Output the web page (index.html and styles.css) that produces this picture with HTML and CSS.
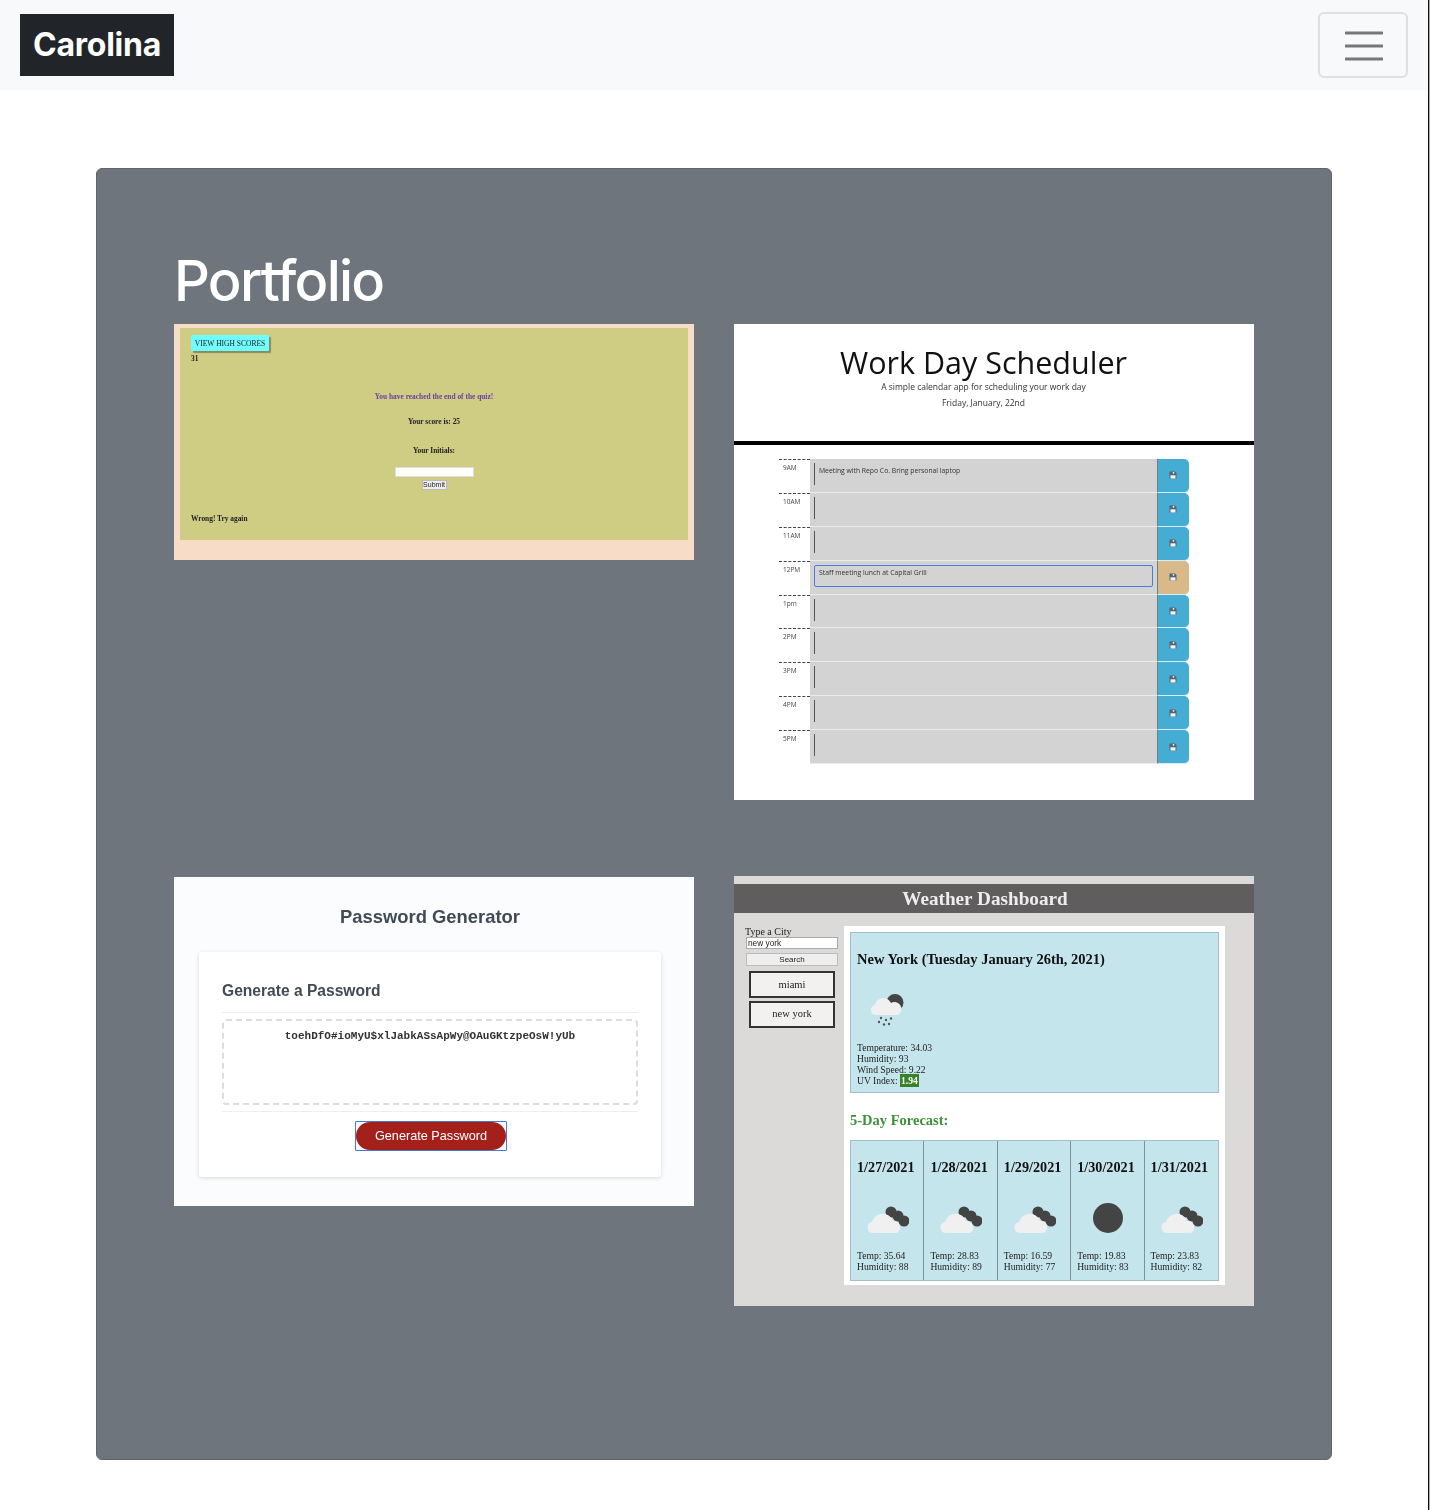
FILE: index.html
```html
<!DOCTYPE html>
<html lang="en">
<head>
<meta charset="utf-8">
<title>Carolina</title>
<link rel="stylesheet" href="styles.css">
</head>
<body>
<svg class="defs" width="0" height="0" aria-hidden="true">
  <symbol id="floppy" viewBox="0 0 8 8">
    <path d="M.5.5h5.500l1.500 1.500v5.500h-7z" fill="#56626e"/>
    <rect x="3.800" y="1" width="1.400" height="1.700" fill="#eef3f6"/>
    <rect x="1.500" y="4.300" width="5" height="3.200" fill="#eef3f6"/>
  </symbol>
  <symbol id="cloudy" viewBox="0 0 42 28">
    <circle cx="24" cy="7" r="5.500" fill="#444"/>
    <circle cx="31" cy="11" r="5.500" fill="#444"/>
    <circle cx="37" cy="16" r="5.500" fill="#444"/>
    <path d="M6 28a5.500 5.500 0 0 1-1-10.900A11 11 0 0 1 26 16a6.500 6.500 0 0 1 4 12z" fill="#f0f0f0"/>
  </symbol>
</svg>
<nav class="navbar">
  <a class="brand">Carolina</a>
  <button class="toggler" type="button" aria-label="Toggle navigation">
    <svg width="38" height="30" viewBox="0 0 38 30"><path d="M1 2h36M1 15h36M1 28h36" stroke="#777" stroke-width="3" stroke-linecap="round"/></svg>
  </button>
</nav>
<main class="jumbotron">
  <h1 class="jumbo-title">Portfolio</h1>
  <div class="gallery">

    <section class="shot quiz">
      <div class="quiz-inner">
        <span class="quiz-scores">VIEW HIGH SCORES</span>
        <span class="quiz-timer">31</span>
        <p class="quiz-msg">You have reached the end of the quiz!</p>
        <p class="quiz-score">Your score is: 25</p>
        <p class="quiz-initials">Your Initials:</p>
        <span class="quiz-input"></span>
        <span class="quiz-submit">Submit</span>
        <p class="quiz-wrong">Wrong! Try again</p>
      </div>
    </section>

    <section class="shot sched">
      <header class="sched-head">
        <h2 class="sched-title">Work Day Scheduler</h2>
        <p class="sched-sub">A simple calendar app for scheduling your work day</p>
        <p class="sched-date">Friday, January, 22nd</p>
      </header>
      <div class="sched-rows">
        <div class="sched-row"><span class="hour">9AM</span><div class="slot"><span class="slot-text">Meeting with Repo Co. Bring personal laptop</span></div><span class="save"><svg class="floppy"><use href="#floppy"/></svg></span></div>
        <div class="sched-row"><span class="hour">10AM</span><div class="slot"><span class="slot-text"></span></div><span class="save"><svg class="floppy"><use href="#floppy"/></svg></span></div>
        <div class="sched-row"><span class="hour">11AM</span><div class="slot"><span class="slot-text"></span></div><span class="save"><svg class="floppy"><use href="#floppy"/></svg></span></div>
        <div class="sched-row"><span class="hour">12PM</span><div class="slot"><span class="slot-text focused">Staff meeting lunch at Capital Grill</span></div><span class="save present"><svg class="floppy"><use href="#floppy"/></svg></span></div>
        <div class="sched-row"><span class="hour">1pm</span><div class="slot"><span class="slot-text"></span></div><span class="save"><svg class="floppy"><use href="#floppy"/></svg></span></div>
        <div class="sched-row"><span class="hour">2PM</span><div class="slot"><span class="slot-text"></span></div><span class="save"><svg class="floppy"><use href="#floppy"/></svg></span></div>
        <div class="sched-row"><span class="hour">3PM</span><div class="slot"><span class="slot-text"></span></div><span class="save"><svg class="floppy"><use href="#floppy"/></svg></span></div>
        <div class="sched-row"><span class="hour">4PM</span><div class="slot"><span class="slot-text"></span></div><span class="save"><svg class="floppy"><use href="#floppy"/></svg></span></div>
        <div class="sched-row"><span class="hour">5PM</span><div class="slot"><span class="slot-text"></span></div><span class="save"><svg class="floppy"><use href="#floppy"/></svg></span></div>
      </div>
    </section>

    <section class="shot pw">
      <h2 class="pw-title">Password Generator</h2>
      <div class="pw-card">
        <h3 class="pw-heading">Generate a Password</h3>
        <div class="pw-box">toehDfO#ioMyU$xlJabkASsApWy@OAuGKtzpeOsW!yUb</div>
        <div class="pw-foot"><span class="pw-focus"><span class="pw-btn">Generate Password</span></span></div>
      </div>
    </section>

    <section class="shot wx">
      <h2 class="wx-title">Weather Dashboard</h2>
      <div class="wx-body">
        <aside class="wx-side">
          <span class="wx-label">Type a City</span>
          <span class="wx-input">new york</span>
          <span class="wx-search">Search</span>
          <span class="wx-city">miami</span>
          <span class="wx-city">new york</span>
        </aside>
        <div class="wx-panel">
          <div class="wx-now">
            <h3 class="wx-city-title">New York (Tuesday January 26th, 2021)</h3>
            <svg class="wx-now-icon" viewBox="0 0 37 34">
              <circle cx="27" cy="9.500" r="8.500" fill="#444"/>
              <path d="M8 22a5 5 0 0 1-1-9.900A8.500 8.500 0 0 1 23 10a6 6 0 0 1 7 12z" fill="#f0f0f0"/>
              <g fill="#555"><circle cx="13" cy="25" r="1.200"/><circle cx="18" cy="27" r="1.200"/><circle cx="23" cy="25.500" r="1.200"/><circle cx="11" cy="29" r="1.200"/><circle cx="16" cy="31.500" r="1.200"/><circle cx="21" cy="31" r="1.200"/></g>
            </svg>
            <p class="wx-stats">Temperature: 34.03<br>Humidity: 93<br>Wind Speed: 9.22<br>UV Index: <span class="wx-uv">1.94</span></p>
          </div>
          <h3 class="wx-forecast-title">5-Day Forecast:</h3>
          <div class="wx-forecast">
            <div class="wx-day"><h4 class="wx-date">1/27/2021</h4><svg class="wx-icon"><use href="#cloudy"/></svg><p class="wx-stats">Temp: 35.64<br>Humidity: 88</p></div>
            <div class="wx-day"><h4 class="wx-date">1/28/2021</h4><svg class="wx-icon"><use href="#cloudy"/></svg><p class="wx-stats">Temp: 28.83<br>Humidity: 89</p></div>
            <div class="wx-day"><h4 class="wx-date">1/29/2021</h4><svg class="wx-icon"><use href="#cloudy"/></svg><p class="wx-stats">Temp: 16.59<br>Humidity: 77</p></div>
            <div class="wx-day"><h4 class="wx-date">1/30/2021</h4><svg class="wx-icon" viewBox="0 0 42 28"><circle cx="21" cy="13" r="15" fill="#444"/></svg><p class="wx-stats">Temp: 19.83<br>Humidity: 83</p></div>
            <div class="wx-day"><h4 class="wx-date">1/31/2021</h4><svg class="wx-icon"><use href="#cloudy"/></svg><p class="wx-stats">Temp: 23.83<br>Humidity: 82</p></div>
          </div>
        </div>
      </div>
    </section>

  </div>
</main>
</body>
</html>
```

FILE: styles.css
```css
* { box-sizing: border-box; }
html { background: #a9a9a9; }
body {
  margin: 0;
  width: 1429px;
  min-height: 1510px;
  background: #fff;
  border-right: 1px solid #111;
  font-family: Inter, "Liberation Sans", sans-serif;
}
h1, h2, h3, h4, p { margin: 0; }
.defs { position: absolute; }

/* navbar */
.navbar {
  height: 90px;
  background: #f8f9fa;
  display: flex;
  justify-content: space-between;
  align-items: center;
  padding: 0 20px;
}
.brand {
  height: 62px;
  width: 154px;
  background: #212529;
  color: #fff;
  font-size: 32px;
  font-weight: 700;
  letter-spacing: -.25px;
  line-height: 62px;
  text-align: center;
}
.toggler {
  width: 90px;
  height: 66px;
  padding: 2px 0 0 2px;
  background: transparent;
  border: 2px solid #dfe0e2;
  border-radius: 6px;
  display: flex;
  align-items: center;
  justify-content: center;
}

/* jumbotron */
.jumbotron {
  width: 1236px;
  height: 1292px;
  margin: 78px 0 0 96px;
  padding: 79px 77px 0;
  background: #6e757d;
  border: 1px solid #5f656c;
  border-radius: 6px;
}
.jumbo-title {
  color: #fff;
  font-size: 56px;
  font-weight: 500;
  letter-spacing: -1.750px;
  line-height: 67px;
  margin-bottom: 9px;
}
.gallery {
  display: grid;
  grid-template-columns: 520px 520px;
  grid-template-rows: 476px auto;
  column-gap: 40px;
  row-gap: 76px;
  align-items: start;
}
.shot { width: 520px; overflow: hidden; filter: blur(.4px); }

/* quiz shot */
.quiz { height: 236px; background: #f7dcc7; padding: 4px 6px 0; font-family: "Liberation Serif", serif; }
.quiz-inner {
  height: 212px;
  background: #cfcc84;
  padding: 7px 11px 0;
  display: flex;
  flex-direction: column;
  align-items: center;
  font-size: 7.400px;
  font-weight: 700;
  line-height: 10px;
  color: #222;
}
.quiz-scores {
  align-self: flex-start;
  width: 78px;
  height: 16px;
  line-height: 17px;
  text-align: center;
  font-weight: 400;
  font-size: 7.500px;
  background: #70fdfd;
  border-radius: 1px;
  box-shadow: 2px 2px 1px #8a8a60;
}
.quiz-timer { align-self: flex-start; margin-top: 3px; }
.quiz-msg { margin-top: 28px; color: #6b3fa0; }
.quiz-score { margin-top: 15px; }
.quiz-initials { margin-top: 19px; }
.quiz-input { margin-top: 11px; width: 79px; height: 10px; background: #fff; border: 1px solid #ddd; }
.quiz-submit {
  margin-top: 3px;
  width: 25px;
  height: 10px;
  background: #eee;
  border: 1px solid #bbb;
  font: 400 7px/8px "Liberation Sans", sans-serif;
  text-align: center;
}
.quiz-wrong { align-self: flex-start; margin-top: 24px; }

/* scheduler shot */
.sched { height: 476px; background: #fff; font-family: "Open Sans", sans-serif; }
.sched-head {
  height: 121px;
  padding: 20px 21px 0 0;
  border-bottom: 4px solid #000;
  text-align: center;
  color: #111;
}
.sched-title { font-size: 30.500px; font-weight: 400; line-height: 36px; }
.sched-sub { margin-top: 1px; font-size: 8.500px; line-height: 12px; color: #333; }
.sched-date { font-size: 8.500px; line-height: 12px; margin-top: 4px; color: #333; }
.sched-rows {
  margin: 14px 0 0 45px;
  width: 410px;
  display: grid;
  grid-auto-rows: 33.900px;
}
.sched-row { display: grid; grid-template-columns: 31px 347px 32px; }
.hour {
  border-top: 1px dashed #444;
  padding: 3px 0 0 4px;
  font-size: 6.500px;
  line-height: 9px;
  color: #444;
}
.slot {
  background: #d3d3d3;
  border-bottom: 1px solid #ececec;
  padding: 4px 4px 0 4px;
}
.slot-text {
  display: block;
  height: 22px;
  padding: 3px 0 0 4px;
  border-left: 1px solid #555;
  font-size: 6.800px;
  line-height: 9px;
  color: #333;
}
.focused { border: 1px solid #4a7fd8; border-radius: 2px; padding: 2px 0 0 4px; }
.save {
  background: #45acd3;
  border-left: 1px solid #6e7f88;
  border-bottom: 1px solid #d8eef6;
  border-radius: 0 5px 5px 0;
  display: flex;
  align-items: center;
  justify-content: center;
  padding-right: 2px;
}
.present { background: #d9b88a; }
.floppy { width: 8px; height: 8px; }

/* password shot */
.pw {
  height: 329px;
  margin-top: 1px;
  background: #fbfcfd;
  padding-top: 30px;
  font-family: "Liberation Sans", sans-serif;
  color: #414b56;
}
.pw-title { font-size: 18.400px; font-weight: 700; line-height: 20px; text-align: center; padding-right: 8px; }
.pw-card {
  width: 462px;
  height: 225px;
  margin: 25px 0 0 25px;
  padding: 29px 23px 0;
  background: #fff;
  border-radius: 3px;
  box-shadow: 0 1px 4px rgba(0, 0, 0, .15);
}
.pw-heading {
  font-size: 15.600px;
  font-weight: 700;
  line-height: 20px;
  padding-bottom: 11px;
  border-bottom: 1px solid #eee;
}
.pw-box {
  margin-top: 6px;
  height: 86px;
  padding-top: 8px;
  border: 2px dashed #dcdcdc;
  border-radius: 4px;
  font: 700 11px/14px "Liberation Mono", monospace;
  text-align: center;
  color: #333;
}
.pw-foot { margin-top: 6px; padding: 9px 0 0 2px; border-top: 1px solid #eee; display: flex; justify-content: center; }
.pw-focus { width: 152px; height: 30px; border: 1px solid #3f79dc; background: #fff; border-radius: 1px; }
.pw-btn {
  display: block;
  height: 28px;
  background: #a3211a;
  border-radius: 14px;
  color: #fff;
  font-size: 12.700px;
  line-height: 28px;
  text-align: center;
}

/* weather shot */
.wx {
  height: 430px;
  background: #dbdad9;
  padding-top: 8px;
  font-family: "Liberation Serif", serif;
  color: #222;
}
.wx-title {
  height: 29px;
  background: #5f5d5d;
  color: #eee;
  font-size: 19.200px;
  font-weight: 700;
  line-height: 29px;
  text-align: center;
  padding-right: 18px;
}
.wx-body { display: flex; padding: 13px 0 0 11px; }
.wx-side { width: 99px; display: flex; flex-direction: column; align-items: flex-start; }
.wx-label { margin-top: 1px; font-size: 10px; line-height: 10px; }
.wx-input {
  margin-left: 1px;
  width: 92px;
  height: 12px;
  padding-left: 1px;
  background: #fff;
  border: 1px solid #aaa;
  font: 8.300px/10px "Liberation Sans", sans-serif;
}
.wx-search {
  margin: 4px 0 0 1px;
  width: 92px;
  height: 13px;
  background: #eee;
  border: 1px solid #bbb;
  font: 8px/11px "Liberation Sans", sans-serif;
  text-align: center;
}
.wx-city {
  margin: 5px 0 0 4px;
  width: 86px;
  height: 27px;
  background: #f2f1f0;
  border: 2px solid #333;
  font-size: 10.500px;
  line-height: 23px;
  text-align: center;
}
.wx-city + .wx-city { margin-top: 3px; line-height: 22px; }
.wx-panel { width: 381px; height: 359px; padding: 6px; background: #fff; }
.wx-now { height: 161px; padding: 18px 6px 0; background: #c4e5ec; border: 1px solid #a5bec9; }
.wx-city-title { font-size: 14.500px; font-weight: 700; line-height: 16px; color: #111; }
.wx-now-icon { display: block; width: 37px; height: 34px; margin: 26px 0 15px 11px; }
.wx-stats { font-size: 9.600px; line-height: 11px; }
.wx-uv { padding: 1px; background: #378227; color: #fff; font-weight: 700; }
.wx-forecast-title { margin-top: 19px; font-size: 14.500px; font-weight: 700; line-height: 16px; color: #3f8f3a; }
.wx-forecast {
  margin-top: 12px;
  height: 141px;
  display: grid;
  grid-template-columns: repeat(5, 1fr);
  background: #c4e5ec;
  border: 1px solid #a5bec9;
}
.wx-day { padding: 18px 0 0 6px; border-right: 1px solid #7d90a0; }
.wx-day:last-child { border-right: 0; }
.wx-date { font-size: 14.200px; font-weight: 700; line-height: 16px; color: #111; }
.wx-icon { display: block; width: 42px; height: 28px; margin: 30px 0 17px 10px; overflow: visible; }
```
